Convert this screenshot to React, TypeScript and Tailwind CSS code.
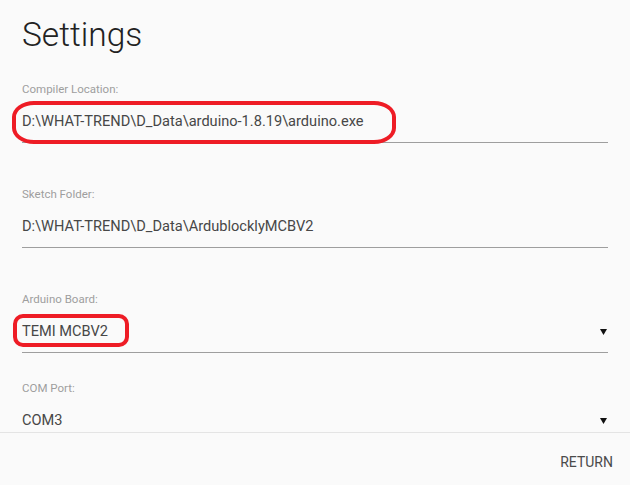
import React from "react";

type FieldProps = {
  label: string;
  value: string;
  select?: boolean;
  gap?: string;
};

function Caret() {
  return (
    <svg width="7" height="6" viewBox="0 0 7 6" className="mr-[1px] mt-[2px]">
      <path d="M0 0 H7 L3.5 6 Z" fill="#111" />
    </svg>
  );
}

function Field({ label, value, select, gap = "mt-[36px]" }: FieldProps) {
  return (
    <div className={gap}>
      <div className="text-[11.5px] leading-[16px] text-[#9e9e9e]">{label}</div>
      <div className="mt-[13px] flex h-[22px] items-center justify-between text-[14.6px] leading-[22px] text-[#474747]">
        <span>{value}</span>
        {select && <Caret />}
      </div>
      <div className="mt-[10px] border-b border-[#9e9e9e]" />
    </div>
  );
}

export default function App() {
  return (
    <div
      className="relative flex h-[485px] w-[630px] flex-col overflow-hidden bg-[#fafafa]"
      style={{ fontFamily: "Roboto, 'Liberation Sans', sans-serif" }}
    >
      <main className="h-[432px] overflow-hidden pl-[22px] pr-[22px]">
        <h1 className="mt-[15px] text-[33.5px] font-light leading-[40px] text-[#222]">Settings</h1>
        <Field label="Compiler Location:" value={"D:\\WHAT-TREND\\D_Data\\arduino-1.8.19\\arduino.exe"} gap="mt-[26px]" />
        <Field label="Sketch Folder:" value={"D:\\WHAT-TREND\\D_Data\\ArdublocklyMCBV2"} gap="mt-[43px]" />
        <Field label="Arduino Board:" value="TEMI MCBV2" select gap="mt-[43px]" />
        <Field label="COM Port:" value="COM3" select gap="mt-[27px]" />
      </main>

      <footer className="flex h-[53px] justify-end border-t border-[#e4e4e4] pr-[17px] pt-[21px]">
        <button type="button" className="h-[16px] text-[14px] leading-[16px] uppercase text-[#4a4a4a]">
          Return
        </button>
      </footer>

      {/* red annotation marks drawn on the screenshot */}
      <div className="absolute left-[12px] top-[101px] h-[43px] w-[384px] rounded-[22px/16px] border-[4px] border-[#ee1c25]" />
      <div className="absolute left-[13px] top-[314px] h-[33px] w-[116px] rounded-[10px] border-[4px] border-[#ee1c25]" />
    </div>
  );
}
